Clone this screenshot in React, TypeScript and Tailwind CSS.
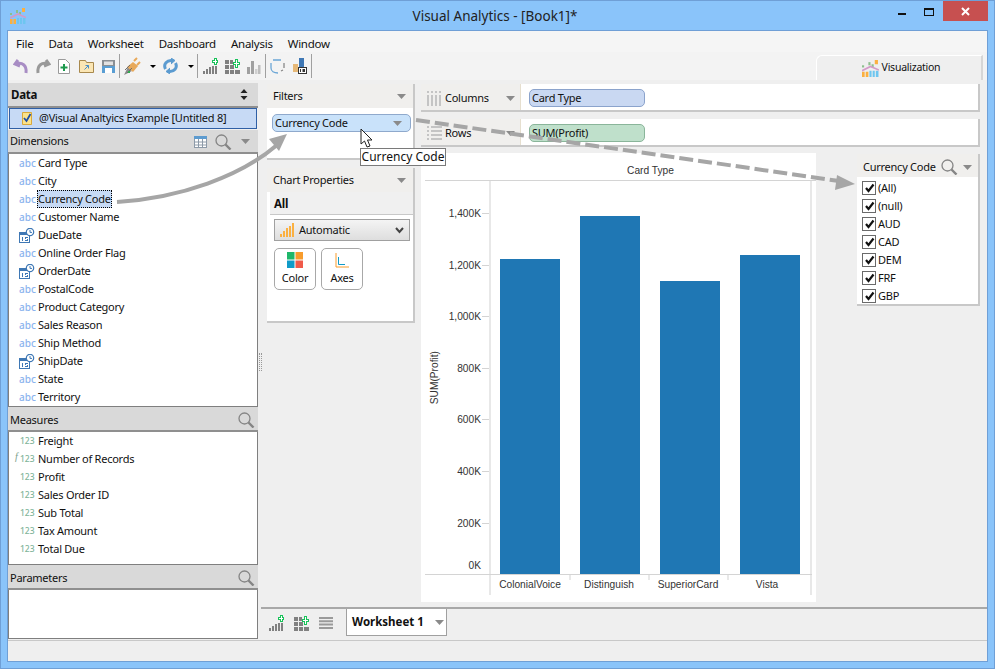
const dimensions: { name: string; date?: boolean; selected?: boolean }[] = [
  { name: 'Card Type' },
  { name: 'City' },
  { name: 'Currency Code', selected: true },
  { name: 'Customer Name' },
  { name: 'DueDate', date: true },
  { name: 'Online Order Flag' },
  { name: 'OrderDate', date: true },
  { name: 'PostalCode' },
  { name: 'Product Category' },
  { name: 'Sales Reason' },
  { name: 'Ship Method' },
  { name: 'ShipDate', date: true },
  { name: 'State' },
  { name: 'Territory' },
];

const measures = ['Freight', 'Number of Records', 'Profit', 'Sales Order ID', 'Sub Total', 'Tax Amount', 'Total Due'];
const currencies = ['(All)', '(null)', 'AUD', 'CAD', 'DEM', 'FRF', 'GBP'];
const ticks = ['1,400K', '1,200K', '1,000K', '800K', '600K', '400K', '200K'];

const Caret = ({ className = 'text-[#8a8a8a]' }: { className?: string }) => (
  <svg width="9" height="5" viewBox="0 0 9 5" className={className}>
    <path d="M0 0h9L4.500 5z" fill="currentColor" />
  </svg>
);

const SmallCaret = ({ className }: { className: string }) => (
  <svg width="6" height="3" viewBox="0 0 6 3" className={className}>
    <path d="M0 0h6L3 3z" fill="#000" />
  </svg>
);

const Search = () => (
  <svg width="17" height="16" viewBox="0 0 17 16" fill="none" stroke="#858585">
    <circle cx="6.500" cy="6.500" r="5.500" strokeWidth="1.300" />
    <path d="M10.500 10.500l5 5" strokeWidth="2.400" />
  </svg>
);

const Logo = ({ size = 16 }: { size?: number }) => (
  <svg width={size} height={size} viewBox="0 0 16 16">
    <path d="M0 11h2.500v5H0zM3.500 11H6v5H3.500z" fill="#fbb040" />
    <path d="M7 10h2v6H7zM10 10h2v6h-2zM13 10h2.500v6H13z" fill="#6ec6f0" />
    <path d="M6 2h2v3H6z" fill="#8dbf8d" />
    <path d="M9 4h2v3H9z" fill="#8dbf8d" />
    <path d="M12 0h3v4h-3z" fill="#fbb040" />
    <path d="M0 5h2v2H0z" fill="#8dbf8d" />
    <path d="M0 10l8-4 8 3.500" stroke="#d49ac8" strokeWidth="1.600" fill="none" />
  </svg>
);

const BarsPlus = ({ color = '#808080' }: { color?: string }) => (
  <svg width="15" height="16" viewBox="0 0 15 16">
    <path d="M0 13h2v3H0zM3 11h2v5H3zM6 9h2v7H6zM9 8h2v8H9zM12 8h2v8h-2z" fill={color} />
    <path d="M9 2h2V0h3v2h1v3h-1v2h-3V5H9z" fill="#19c25a" />
    <path d="M10 3h2V1h1v2h1v1h-1v2h-1V4h-2z" fill="#fff" />
  </svg>
);

const GridPlus = () => (
  <svg width="15" height="15" viewBox="0 0 15 15">
    <path d="M0 1h4v4H0zM5 1h3v4H5zM0 6h4v4H0zM5 6h4v4H5zM0 11h4v4H0zM5 11h4v4H5zM10 11h5v4h-5z" fill="#808080" />
    <path d="M8 3h2V0h3v3h2v3h-2v3h-3V6H8z" fill="#19c25a" />
    <path d="M9 4h2V1h1v3h2v1h-2v3h-1V5H9z" fill="#fff" />
  </svg>
);

const CalendarClock = () => (
  <svg width="16" height="15" viewBox="0 0 16 15" className="shrink-0">
    <rect x="0.500" y="4.500" width="10" height="10" fill="#fff" stroke="#3f78b5" />
    <rect x="0" y="4" width="11" height="3" fill="#3f78b5" />
    <path d="M3 9h1v4H3zM6 9h3v1H7v1h2v2H6v-1h2v-1H6z" fill="#3f78b5" />
    <circle cx="11" cy="4" r="3.700" fill="#fff" stroke="#3f78b5" strokeWidth="1.200" />
    <path d="M11 2v2.400h2" stroke="#3f78b5" fill="none" />
  </svg>
);

const Toolbar = () => (
  <div className="flex h-[28px] shrink-0 items-center bg-[#f3f3f3] pl-[5px]">
    <svg width="16" height="15" viewBox="0 0 16 15" fill="none" stroke="#a88dc4" strokeWidth="3">
      <path d="M5 1L2 5l5 2" />
      <path d="M3 5c6-2 11 1 10 9" />
    </svg>
    <svg width="16" height="15" viewBox="0 0 16 15" className="ml-[6px]" fill="none" stroke="#999" strokeWidth="3">
      <path d="M11 1l3 4-5 2" />
      <path d="M13 5C7 3 2 6 3 14" />
    </svg>
    <svg width="12" height="15" viewBox="0 0 12 15" className="ml-[7px]">
      <path d="M.5.5h7l4 4v10H.5z" fill="#fff" stroke="#9a9a9a" />
      <path d="M5 5h2v2.500h2.500v2H7V12H5V9.500H2.500v-2H5z" fill="#1d9a4d" />
    </svg>
    <svg width="15" height="14" viewBox="0 0 15 14" className="ml-[9px]">
      <path d="M.5 1.500h6l1 2h7v10H.5z" fill="#fbe6b4" stroke="#a8894d" />
      <path d="M5.500 10.500l4-4M6.500 6.500h3v3" stroke="#4a8fc7" fill="none" />
    </svg>
    <svg width="13" height="13" viewBox="0 0 13 13" className="ml-[8px]">
      <rect width="13" height="13" fill="#8a8f94" />
      <rect x="0" y="6" width="13" height="7" fill="#5a9ed3" />
      <rect x="2" y="1.500" width="9" height="3.500" fill="#e2e2e2" />
      <rect x="3" y="8" width="7" height="5" fill="#fff" />
    </svg>
    <div className="ml-[4px] h-[24px] w-px bg-[#a0a0a0]" />
    <svg width="17" height="19" viewBox="0 0 17 19" className="ml-[4px]">
      <path d="M0 18l4-8 4 4z" fill="#8a8a8a" />
      <path d="M3 10l6-5 5 4-5 6z" fill="#e8a95a" />
      <path d="M10 4l3-3M13 8l3-3" stroke="#e8a95a" strokeWidth="2" />
      <path d="M1 13l5-5M3 16l5-5" stroke="#6f6f6f" />
      <path d="M4 14h2v2H4z" fill="#2fae4f" />
    </svg>
    <SmallCaret className="ml-[9px]" />
    <svg width="15" height="16" viewBox="0 0 15 16" className="ml-[7px]" fill="none" stroke="#5b9bd0" strokeWidth="3">
      <path d="M2.500 11C0 6 4 2 9 2.500" />
      <path d="M12.500 5C15 10 11 14 6 13.500" />
      <path d="M8 0l4 2.500L8 6M7 10l-4 3.500L7 16" fill="#5b9bd0" strokeWidth="1" />
    </svg>
    <SmallCaret className="ml-[10px]" />
    <div className="ml-[3px] h-[24px] w-px bg-[#a0a0a0]" />
    <div className="ml-[5px]"><BarsPlus /></div>
    <div className="ml-[7px]"><GridPlus /></div>
    <svg width="14" height="15" viewBox="0 0 14 15" className="ml-[7px]">
      <path d="M0 8h3v7H0zM4 2h3v13H4z" fill="#a0a0a0" />
      <path d="M8 10h2.500v5H8z" fill="#cfcfcf" />
      <path d="M11 6h2.500v9H11z" fill="#bdbdbd" />
    </svg>
    <div className="ml-[4px] h-[24px] w-px bg-[#a0a0a0]" />
    <svg width="15" height="15" viewBox="0 0 15 15" className="ml-[4px]" fill="none" stroke="#6ba6d6" strokeWidth="1.300">
      <path d="M1 4v5c0 3 3 5 7 5M3 1h8" />
      <path d="M14 4v5M11 12l2-1" stroke="#888" />
    </svg>
    <svg width="14" height="17" viewBox="0 0 14 17" className="ml-[8px]">
      <path d="M0 6h5v8H0z" fill="#e6b877" />
      <path d="M6 0h5v9H6z" fill="#3f78b5" />
      <rect x="5.500" y="9.500" width="8" height="6" fill="#fff" stroke="#333" />
      <path d="M7 11h1v3H7zM9.500 11h2.500v3H9.500z" fill="#333" />
    </svg>
    <div className="ml-[4px] h-[24px] w-px bg-[#a0a0a0]" />
    <div className="flex-1" />
    <div className="mt-[3px] mr-[4px] flex h-[25px] w-[167px] items-center justify-center gap-[3px] self-start rounded-tl-[6px] border-t border-l border-r-2 border-white border-r-[#d6d6d6] bg-[#efefef] pl-[4px] text-[10.5px]">
      <Logo size={17} />
      <span>Visualization</span>
    </div>
  </div>
);

const SideHeader = ({ title, tall, children }: { title: string; tall?: boolean; children?: React.ReactNode }) => (
  <div className={`flex items-center justify-between border-b-2 border-[#8f8f8f] bg-[#d9d9d9] pl-[2px] ${tall ? 'h-[25px] pt-[3px]' : 'h-[24px] pt-px'}`}>
    <span>{title}</span>
    <div className="flex items-center">{children}</div>
  </div>
);

const Sidebar = () => (
  <div className="flex w-[250px] shrink-0 flex-col">
    <div className="flex h-[23px] items-center justify-between bg-[#d9d9d9] pl-[3px] pr-[10px] text-[11.5px] font-bold">
      <span>Data</span>
      <svg width="8" height="11" viewBox="0 0 8 11">
        <path d="M4 0l3.500 4h-7zM4 11L.5 7h7z" fill="#222" />
      </svg>
    </div>
    <div className="h-[24px] border-t-2 border-[#8f8f8f] bg-[#f0f0f0] px-px">
      <div className="flex h-[21px] items-center gap-[7px] border border-[#2f5fa5] bg-[#c7daf5] pl-[12px]">
        <svg width="10" height="13" viewBox="0 0 10 13">
          <path d="M.5.5h9v12h-9z" fill="#fbe28a" stroke="#d9a93a" />
          <path d="M2 6l2.500 3L8.500 2" stroke="#1f4fa5" strokeWidth="1.800" fill="none" />
        </svg>
        <span>@Visual Analtyics Example [Untitled 8]</span>
      </div>
    </div>
    <SideHeader title="Dimensions">
      <svg width="13" height="12" viewBox="0 0 13 12" className="mr-[8px]">
        <rect x=".5" y=".5" width="12" height="11" fill="#fff" stroke="#8d9aa8" />
        <rect x="0" y="0" width="13" height="3" fill="#5d9bcf" />
        <path d="M4.500 3v8M8.500 3v8M1 6h11M1 9h11" stroke="#8d9aa8" />
      </svg>
      <Search />
      <Caret className="ml-[9px] mr-[8px] text-[#8a8a8a]" />
    </SideHeader>
    <div className="h-[253px] border-x border-b border-[#7f7f7f] bg-white">
      {dimensions.map((d) => (
        <div key={d.name} className="flex h-[18px] items-center pl-[10px]">
          <div className="flex w-[18px] justify-start">
            {d.date ? <CalendarClock /> : <span className="text-[10px] font-medium leading-none tracking-normal text-[#8cb4ee]">abc</span>}
          </div>
          <span className={d.selected ? 'border border-dotted border-black bg-[#c7daf5] leading-[16px]' : 'border border-transparent leading-[16px]'}>
            {d.name}
          </span>
        </div>
      ))}
    </div>
    <SideHeader title="Measures" tall>
      <div className="mr-[3px]"><Search /></div>
    </SideHeader>
    <div className="h-[133px] border-x border-b border-[#7f7f7f] bg-white">
      {measures.map((m) => (
        <div key={m} className="relative flex h-[18px] items-center pl-[11px]">
          {m === 'Number of Records' && (
            <span className="absolute left-[6px] top-[-1px] font-['Liberation_Serif',serif] text-[10px] italic text-[#7aa08a]">f</span>
          )}
          <span className="w-[17px] text-[8.5px] font-medium leading-none tracking-normal text-[#7fb59a]">123</span>
          <span className="border border-transparent">{m}</span>
        </div>
      ))}
    </div>
    <SideHeader title="Parameters" tall>
      <div className="mr-[3px]"><Search /></div>
    </SideHeader>
    <div className="h-[49px] border-x border-b border-[#7f7f7f] bg-white" />
  </div>
);

const PanelHeader = ({ title }: { title: string }) => (
  <div className="flex h-[24px] items-center justify-between bg-[#f0efed] pl-[6px] pr-[7px] pt-px">
    <span>{title}</span>
    <Caret />
  </div>
);

const Shelf = ({ label, pill, icon, color }: { label: string; pill: string; icon: React.ReactNode; color: string }) => (
  <div className="flex h-[28px] border-r-2 border-b-2 border-[#c8c8c8] bg-white">
    <div className="flex w-[100px] items-center border-r border-[#e6dfcf] bg-[#f0efed] pl-[6px] pt-[2px]">
      {icon}
      <span className="ml-[3px] w-[61px]">{label}</span>
      <Caret />
    </div>
    <div className="flex items-center pl-[8px] pt-[2px]">
      <div className={`h-[18px] w-[116px] rounded-[5px] border pl-[2px] leading-[16px] ${color}`}>{pill}</div>
    </div>
  </div>
);

const Chart = () => (
  <div className="flex h-[449px] w-[395px] shrink-0 flex-col bg-white pl-[4px] font-['Liberation_Sans',sans-serif] text-[10.2px] tracking-normal text-[#333]">
    <div className="h-[28px] border-b border-[#d4d4d4] pl-[64px] pr-[4px] pt-[11px] text-center leading-[14px]">Card Type</div>
    <div className="mr-[4px] flex h-[394px] border-b border-[#d4d4d4]">
      <div className="flex w-[20px] items-center justify-center">
        <span className="rotate-180 whitespace-nowrap [writing-mode:vertical-rl]">SUM(Profit)</span>
      </div>
      <div className="w-[44px] pt-[26px]">
        {ticks.map((t) => (
          <div key={t} className="flex h-[51.6px] items-start justify-end">
            <span className="leading-[13px]">{t}</span>
            <span className="mt-[6px] ml-px h-px w-[7px] bg-[#d4d4d4]" />
          </div>
        ))}
        <div className="-mt-[9px] pr-[8px] text-right leading-[13px]">0K</div>
      </div>
      <div className="flex flex-1 items-end gap-[20px] border-x-2 border-[#e8e8e8] pl-[9px]">
        <div className="h-[315px] w-[60px] bg-[#1f77b4]" />
        <div className="h-[358px] w-[60px] bg-[#1f77b4]" />
        <div className="h-[293px] w-[60px] bg-[#1f77b4]" />
        <div className="h-[319px] w-[60px] bg-[#1f77b4]" />
      </div>
    </div>
    <div className="mr-[4px] flex h-[20px] pl-[64px]">
      <div className="flex flex-1 border-x-2 border-[#e8e8e8]">
        {['ColonialVoice', 'Distinguish', 'SuperiorCard', 'Vista'].map((c, i) => (
          <div key={c} className="relative -ml-px w-[80px] pt-[3px] text-center leading-[13px]">
            {c}
            {i < 3 && <span className="absolute right-[-1px] top-0 h-[5px] w-[2px] bg-[#e8e8e8]" />}
          </div>
        ))}
      </div>
    </div>
  </div>
);

const Legend = () => (
  <div className="ml-[41px] mt-px h-[152px] w-[123px] border-r-2 border-b-2 border-[#c8c8c8] bg-white">
    <div className="flex h-[23px] items-center bg-[#f0efed] pl-[6px] pt-[3px]">
      <span className="w-[78px] whitespace-nowrap">Currency Code</span>
      <Search />
      <Caret className="ml-[5px] text-[#8a8a8a]" />
    </div>
    <div className="pl-[5px] pt-[2px]">
      {currencies.map((c) => (
        <div key={c} className="flex h-[18px] items-center gap-[2px]">
          <div className="flex size-[14px] items-center justify-center border border-[#6a6a6a] bg-white">
            <svg width="11" height="10" viewBox="0 0 11 10" fill="none" stroke="#111" strokeWidth="2.200">
              <path d="M2 5l2.500 3L9.500 1.500" />
            </svg>
          </div>
          <span>{c}</span>
        </div>
      ))}
    </div>
  </div>
);

const Main = () => (
  <div className="flex min-w-0 flex-1 flex-col">
    <div className="flex h-[524px] shrink-0">
      <div className="w-[9px] pt-[270px]">
        <div className="ml-px h-[18px] w-[3px] border-x border-dotted border-[#999]" />
      </div>
      <div className="flex w-[148px] shrink-0 flex-col pt-px">
        <div className="h-[76px] border-r-2 border-b-2 border-[#c8c8c8] bg-white">
          <PanelHeader title="Filters" />
          <div className="pl-[5px] pt-[6px]">
            <div className="flex h-[18px] w-[139px] items-center justify-between rounded-[5px] border border-[#8fa9cc] bg-[#c9e2fa] pl-[2px] pr-[8px]">
              <span>Currency Code</span>
              <Caret />
            </div>
          </div>
        </div>
        <div className="mt-[8px] h-[155px] border-r-2 border-b-2 border-[#c8c8c8] bg-white">
          <PanelHeader title="Chart Properties" />
          <div className="ml-[3px] flex h-[23px] items-center border-b border-[#c8c8c8] bg-[#f0f0f0] pl-[4px] pt-px text-[11.5px] font-bold">All</div>
          <div className="pl-[7px] pt-[4px]">
            <div className="flex h-[22px] w-[136px] items-center border border-[#a0a0a0] bg-gradient-to-b from-[#f4f4f4] to-[#dedede] pl-[5px]">
              <svg width="14" height="14" viewBox="0 0 14 14" fill="#fbb040">
                <path d="M0 11h2v3H0zM3 8h2v6H3zM6 5h2v9H6zM9 3h2v11H9zM12 0h2v14h-2z" />
              </svg>
              <span className="ml-[5px] flex-1">Automatic</span>
              <svg width="9" height="7" viewBox="0 0 9 7" fill="none" stroke="#444" strokeWidth="2" className="mr-[5px]">
                <path d="M1 1l3.500 4L8 1" />
              </svg>
            </div>
            <div className="mt-[7px] flex gap-[5px]">
              <div className="flex h-[42px] w-[42px] flex-col items-center rounded-[5px] border border-[#a8a8a8] pt-[3px]">
                <svg width="16" height="16" viewBox="0 0 16 16">
                  <rect width="7.500" height="7.500" fill="#1fb76a" />
                  <rect x="8.500" width="7.500" height="7.500" fill="#f89c2c" />
                  <rect y="8.500" width="7.500" height="7.500" fill="#0f9bc8" />
                  <rect x="8.500" y="8.500" width="7.500" height="7.500" fill="#f05a4a" />
                </svg>
                <span className="mt-[3px] leading-[14px]">Color</span>
              </div>
              <div className="flex h-[42px] w-[42px] flex-col items-center rounded-[5px] border border-[#a8a8a8] pt-[3px]">
                <svg width="14" height="16" viewBox="0 0 14 16" fill="none">
                  <path d="M1 1v14h13" stroke="#f89c2c" />
                  <path d="M3.500 5v7.500H10" stroke="#0f9bc8" />
                </svg>
                <span className="mt-[3px] leading-[14px]">Axes</span>
              </div>
            </div>
          </div>
        </div>
      </div>
      <div className="ml-[6px] flex min-w-0 flex-1 flex-col pt-px">
        <div className="flex flex-col gap-[7px] pr-[7px]">
          <Shelf
            label="Columns"
            pill="Card Type"
            color="border-[#8ba3cc] bg-[#c9d8f2]"
            icon={
              <svg width="15" height="15" viewBox="0 0 15 15">
                <path d="M0 0h2v2H0zM4 0h2v2H4zM8 0h2v2H8zM12 0h2v2h-2zM0 4h2v11H0zM4 4h2v11H4zM8 4h2v11H8zM12 4h2v11h-2z" fill="#c4c4c4" />
              </svg>
            }
          />
          <Shelf
            label="Rows"
            pill="SUM(Profit)"
            color="border-[#8ab59a] bg-[#bfe0cb]"
            icon={
              <svg width="15" height="15" viewBox="0 0 15 15">
                <path d="M0 0h2v2H0zM4 0h11v2H4zM0 4h2v2H0zM4 4h11v2H4zM0 8h2v2H0zM4 8h11v2H4zM0 12h2v2H0zM4 12h11v2H4z" fill="#c4c4c4" />
              </svg>
            }
          />
        </div>
        <div className="mt-[6px] flex">
          <Chart />
          <Legend />
        </div>
      </div>
    </div>
    <div className="ml-[3px] flex h-[33px] items-start border-t-2 border-[#a8a8a8] pl-[8px]">
      <div className="flex h-[28px] items-center gap-[10px]">
        <BarsPlus />
        <GridPlus />
        <svg width="14" height="12" viewBox="0 0 14 12" fill="#9a9a9a">
          <path d="M0 0h14v2H0zM0 3.300h14v2H0zM0 6.600h14v2H0zM0 10h14v2H0z" />
        </svg>
      </div>
      <div className="ml-[13px] flex h-[27px] w-[101px] items-center gap-[11px] border-x border-b border-[#a0a0a0] bg-white pl-[5px]">
        <span className="text-[11.5px] font-bold tracking-normal">Worksheet 1</span>
        <Caret />
      </div>
    </div>
  </div>
);

const Overlays = () => (
  <>
    <svg width="995" height="669" viewBox="0 0 995 669" fill="none" className="pointer-events-none absolute left-0 top-0">
      <path d="M116 201C180 197 240 175 276 144" stroke="#a6a6a6" strokeWidth="4" />
      <path d="M286 133l-18 5 10 12z" fill="#a6a6a6" />
      <path d="M415 119L838 180" stroke="#a6a6a6" strokeWidth="4" strokeDasharray="14 5" />
      <path d="M854 183l-18-9-2 15z" fill="#a6a6a6" />
    </svg>
    <svg width="13" height="20" viewBox="0 0 13 20" className="pointer-events-none absolute left-[359px] top-[127px]">
      <path d="M1 1v15l3.500-3 2.500 6 3-1-2.500-6H12z" fill="#fff" stroke="#222" />
    </svg>
    <div className="absolute left-[359px] top-[147px] flex h-[18px] w-[86px] items-center justify-center border border-[#7a7a7a] bg-white text-[12px] tracking-normal">Currency Code</div>
  </>
);

export default function App() {
  return (
    <div className="relative flex h-[669px] w-[995px] flex-col overflow-hidden border border-[#6f9fd6] bg-[#8ac4fa] font-['Noto_Sans',sans-serif] text-[11px] tracking-[-0.25px] text-[#111]">
      <div className="flex h-[29px] shrink-0">
        <div className="ml-[9px] mt-[7px]"><Logo /></div>
        <div className="flex-1 pl-[66px] pt-[5px] text-center text-[13.5px] leading-[20px] tracking-normal text-[#222]">Visual Analytics - [Book1]*</div>
        <div className="mr-[6px] flex h-[20px] items-start">
          <div className="mt-[12px] mr-[18px] h-[2px] w-[8px] bg-[#111]" />
          <div className="mt-[7px] mr-[9px] h-[8px] w-[10px] border border-t-2 border-[#111]" />
          <div className="flex h-[20px] w-[45px] items-center justify-center bg-[#c75050]">
            <svg width="9" height="9" viewBox="0 0 9 9" stroke="#fff" strokeWidth="2">
              <path d="M1 1l7 7M8 1L1 8" />
            </svg>
          </div>
        </div>
      </div>
      <div className="mx-[6px] mb-[6px] flex min-h-0 flex-1 flex-col border border-[#6f9fd6] bg-[#efefef]">
        <div className="flex h-[21px] shrink-0 items-center gap-[15px] bg-[#f5f5f5] pl-[8px] pt-[5px] text-[11.5px]">
          {['File', 'Data', 'Worksheet', 'Dashboard', 'Analysis', 'Window'].map((m) => (
            <span key={m}>{m}</span>
          ))}
        </div>
        <Toolbar />
        <div className="mt-[3px] flex min-h-0 flex-1">
          <Sidebar />
          <Main />
        </div>
        <div className="h-[21px] shrink-0 border-t border-[#c8c8c8]" />
      </div>
      <Overlays />
    </div>
  );
}
